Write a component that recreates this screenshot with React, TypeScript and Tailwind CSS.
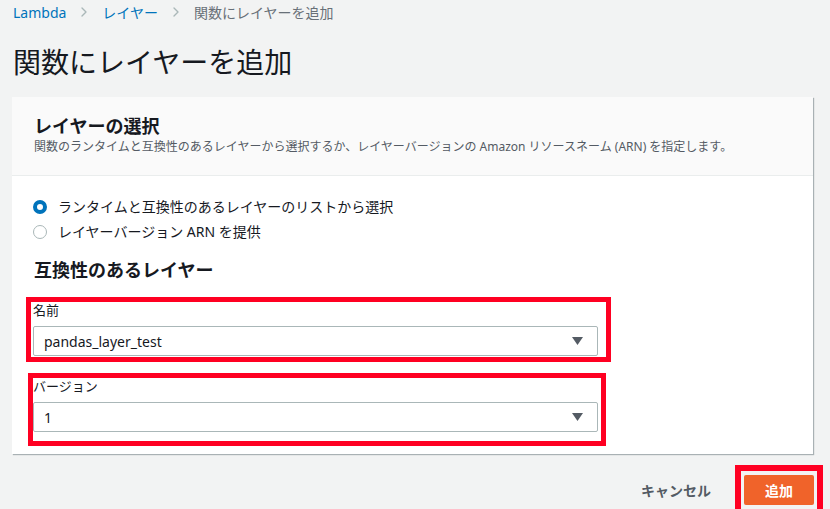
import { ChevronRight } from "lucide-react";

const font = { fontFamily: '"Noto Sans", "Noto Sans CJK JP", sans-serif' };

function Radio({ checked, label }: { checked: boolean; label: string }) {
  return (
    <label className="flex h-[25px] items-center gap-[11px]">
      {checked ? (
        <span className="box-border h-[14px] w-[14px] rounded-full border-[4px] border-[#0073bb] bg-white" />
      ) : (
        <span className="box-border h-[14px] w-[14px] rounded-full border border-[#aab7b8] bg-white" />
      )}
      <span className="text-[14px] text-[#16191f]">{label}</span>
    </label>
  );
}

function Select({ value }: { value: string }) {
  return (
    <div className="flex h-[30px] items-center justify-between rounded-[2px] border border-[#aab7b8] bg-white pl-[10px] pr-[14px]">
      <span className="text-[14px] text-[#16191f]">{value}</span>
      <svg width="11" height="8" viewBox="0 0 11 8">
        <path d="M0 0 H11 L5.5 8 Z" fill="#545b64" />
      </svg>
    </div>
  );
}

export default function App() {
  return (
    <div className="h-[509px] w-[830px] overflow-hidden bg-[#f2f3f3]" style={font}>
      {/* パンくず */}
      <nav className="flex h-[24px] items-center pl-[13px] text-[14px]">
        <span className="text-[#0073bb]">Lambda</span>
        <ChevronRight className="mx-[10px] h-[16px] w-[16px] text-[#aab7b8]" strokeWidth={2} />
        <span className="text-[#0073bb]">レイヤー</span>
        <ChevronRight className="mx-[10px] h-[16px] w-[16px] text-[#aab7b8]" strokeWidth={2} />
        <span className="text-[#687078]">関数にレイヤーを追加</span>
      </nav>

      <h1 className="mt-[19px] pl-[13px] text-[28px] leading-[38px] text-[#16191f]">
        関数にレイヤーを追加
      </h1>

      {/* カード */}
      <div className="ml-[12px] mt-[16px] w-[801px] bg-white shadow-[1px_1px_1px_0_rgba(0,28,36,0.3)]">
        <div className="h-[79px] border-b border-[#eaeded] bg-[#fafafa] px-[22px] pt-[16px]">
          <h2 className="text-[18px] font-bold leading-[26px] text-[#16191f]">レイヤーの選択</h2>
          <p className="text-[12px] leading-[16px] text-[#545b64]">
            関数のランタイムと互換性のあるレイヤーから選択するか、レイヤーバージョンの Amazon リソースネーム (ARN) を指定します。
          </p>
        </div>

        <div className="pb-[8px] pt-[18px]">
          <div className="pl-[21px]">
            <Radio checked label="ランタイムと互換性のあるレイヤーのリストから選択" />
            <Radio checked={false} label="レイヤーバージョン ARN を提供" />
          </div>

          <h3 className="mt-[14px] pl-[22px] text-[18px] font-bold leading-[24px] text-[#16191f]">
            互換性のあるレイヤー
          </h3>

          <div className="ml-[14px] mt-[15px] w-[585px] border-[5px] border-[#ff0022] pb-[1px] pl-[2px] pr-[8px]">
            <div className="h-[16px] text-[13px] leading-[16px] text-[#16191f]">名前</div>
            <div className="mt-[8px]">
              <Select value="pandas_layer_test" />
            </div>
          </div>

          <div className="ml-[16px] mt-[11px] w-[578px] border-[5px] border-[#ff0022] pb-[9px] pr-[3px]">
            <div className="h-[16px] text-[13px] leading-[16px] text-[#16191f]">バージョン</div>
            <div className="mt-[8px]">
              <Select value="1" />
            </div>
          </div>
        </div>
      </div>

      {/* フッター */}
      <div className="mr-[7px] mt-[11px] flex items-center justify-end">
        <button type="button" className="mr-[24px] text-[14px] font-bold text-[#545b64]">
          キャンセル
        </button>
        <div className="border-[6px] border-[#ff0022] px-[3px] py-[4px]">
          <button
            type="button"
            className="block h-[30px] w-[70px] rounded-[2px] bg-[#f0632a] text-[14px] font-bold text-white"
          >
            追加
          </button>
        </div>
      </div>
    </div>
  );
}
